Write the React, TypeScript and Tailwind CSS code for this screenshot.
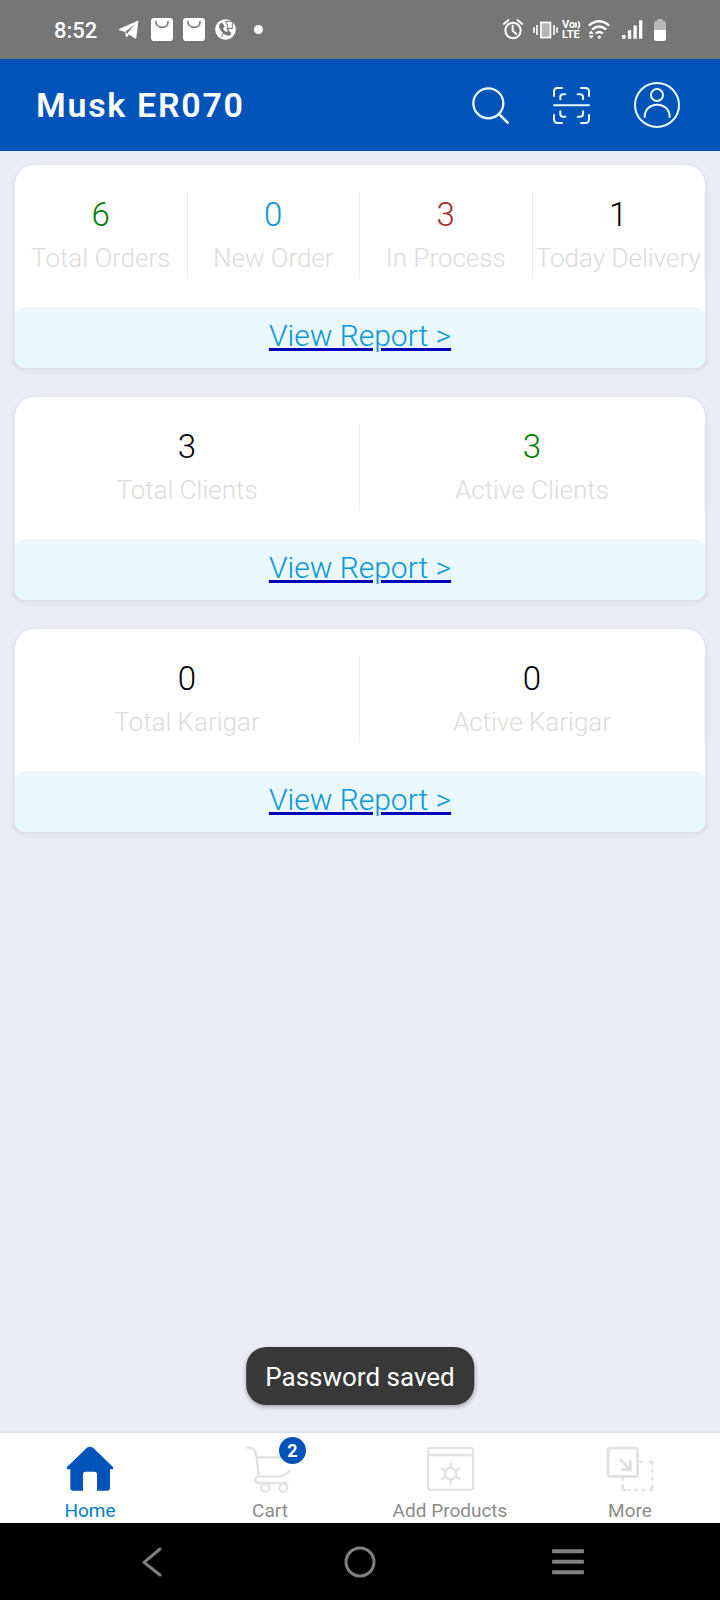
import React from "react";

type Stat = { value: number; label: string; color: string };

const cards: { id: string; stats: Stat[] }[] = [
  {
    id: "orders",
    stats: [
      { value: 6, label: "Total Orders", color: "text-[#008000]" },
      { value: 0, label: "New Order", color: "text-[#0496d8]" },
      { value: 3, label: "In Process", color: "text-[#a52a35]" },
      { value: 1, label: "Today Delivery", color: "text-black" },
    ],
  },
  {
    id: "clients",
    stats: [
      { value: 3, label: "Total Clients", color: "text-black" },
      { value: 3, label: "Active Clients", color: "text-[#008000]" },
    ],
  },
  {
    id: "karigar",
    stats: [
      { value: 0, label: "Total Karigar", color: "text-black" },
      { value: 0, label: "Active Karigar", color: "text-black" },
    ],
  },
];

function BagIcon() {
  return (
    <svg viewBox="0 0 66 69" className="h-[23px] w-[22px]" aria-hidden="true">
      <rect width="66" height="69" rx="10" fill="#fff" />
      <path d="M15 11c0 23 36 23 36 0" fill="none" stroke="#767676" strokeWidth="5" strokeLinecap="round" />
    </svg>
  );
}

function StatusBar() {
  return (
    <div className="flex h-[59px] items-center justify-between bg-[#767676] px-[54px] text-white">
      <div className="flex items-center">
        <span className="w-[65px] pt-[2px] text-[22px] font-medium leading-7">8:52</span>
        <svg viewBox="0 0 62 58" className="mr-3 h-[19px] w-5" aria-hidden="true">
          <path d="M60 1 2 27q-4 3 1 5l16 5 30-24-23 28 22 15q5 3 6-3Z" fill="#fff" />
          <path d="m19 37 3 17 9-9" fill="#fff" />
        </svg>
        <span className="flex items-center gap-[10px]">
          <BagIcon />
          <BagIcon />
          <svg viewBox="0 0 63 63" className="h-[21px] w-[21px]" aria-hidden="true">
            <circle cx="31.500" cy="31.500" r="31" fill="#fff" />
            <path d="M16 13c-6 5-4 16 3 24 8 10 20 17 27 11l3-6-9-8-6 5c-5-2-8-6-10-11l5-5-6-11Z" fill="#767676" />
            <path d="M31 7h21v22H37M37 15v18l9-8M20 54l5-12M31 7l5 10" fill="none" stroke="#767676" strokeWidth="3" />
          </svg>
        </span>
        <span className="ml-[18px] h-[9px] w-[9px] rounded-full bg-white" />
      </div>
      <div className="flex items-center">
        <svg viewBox="0 0 60 62" className="mr-[10px] h-[21px] w-5" fill="none" stroke="#fff" strokeWidth="6" aria-hidden="true">
          <circle cx="30" cy="34" r="23" />
          <path d="M29 20v15l10 9M3 14 16 3M57 14 44 3" strokeLinecap="round" />
        </svg>
        <svg viewBox="0 0 76 54" className="mr-1 h-[18px] w-[25px]" fill="none" stroke="#fff" strokeWidth="5" aria-hidden="true">
          <rect x="24" y="4" width="29" height="46" fill="#b5b5b5" />
          <path d="M3 19v16M12 12v30M64 12v30M73 19v16" />
        </svg>
        <span className="mr-[6px] flex w-5 flex-col text-[11px] font-bold leading-[10px]">
          <span className="flex items-center">
            Vo
            <svg viewBox="0 0 18 24" className="h-2 w-[6px]" fill="none" stroke="#fff" strokeWidth="5" aria-hidden="true">
              <path d="M1 5q6 7 0 14M9 1q9 11 0 22" />
            </svg>
          </span>
          <span>LTE</span>
        </span>
        <svg viewBox="0 0 66 58" className="mr-3 h-[19px] w-[22px]" fill="none" stroke="#fff" strokeWidth="7" aria-hidden="true">
          <path d="M2 17q31-26 62 0M12 29q21-18 43 0M23 41q11-9 22 0" />
          <circle cx="34" cy="52" r="5" fill="#fff" stroke="none" />
          <path d="m9 32 8 10H1ZM9 57l8-10H1Z" fill="#fff" stroke="none" />
        </svg>
        <svg viewBox="0 0 64 58" className="mr-[11px] h-[19px] w-[21px]" fill="#fff" aria-hidden="true">
          <path d="M0 46h11v11H0zM18 31h10v26H18zM35 17h10v40H35zM52 1h10v56H52z" />
        </svg>
        <svg viewBox="0 0 36 66" className="h-[22px] w-3" aria-hidden="true">
          <path d="M9 5q0-5 5-5h8q5 0 5 5 9 0 9 8v21H0V13q0-8 9-8Z" fill="#b8b8b8" />
          <path d="M0 33h36v25q0 8-8 8H8q-8 0-8-8Z" fill="#fff" />
        </svg>
      </div>
    </div>
  );
}

function Header() {
  return (
    <header className="flex h-[92px] items-center justify-between bg-[#0053b8] pl-9 pr-10 text-white">
      <h1 className="text-[34px] font-semibold leading-10 tracking-wider">Musk ER070</h1>
      <div className="flex items-center gap-11 text-[#eafcff]">
        <button type="button" aria-label="Search">
          <svg viewBox="0 0 111 111" className="h-[37px] w-[37px]" fill="none" stroke="currentColor" strokeWidth="7" strokeLinecap="round">
            <circle cx="49" cy="49" r="45" />
            <path d="m82 82 25 25" strokeWidth="8" />
          </svg>
        </button>
        <button type="button" aria-label="Scan code">
          <svg viewBox="0 0 111 111" className="h-[37px] w-[37px]" fill="none" stroke="currentColor" strokeWidth="6" strokeLinecap="round" strokeLinejoin="round">
            <path d="M3 27V14Q3 3 14 3h13M84 3h13q11 0 11 11v13M3 84v13q0 11 11 11h13M84 108h13q11 0 11-11V84M3 55h105" />
            <path d="M22 37v-7q0-8 8-8h7M74 22h7q9 0 9 8v7M22 73v8q0 8 8 8h7M74 89h7q9 0 9-8v-8" />
          </svg>
        </button>
        <button type="button" aria-label="Profile">
          <svg viewBox="0 0 138 138" className="h-[46px] w-[46px]" fill="none" stroke="currentColor" strokeWidth="6" strokeLinecap="round">
            <circle cx="69" cy="69" r="66" />
            <circle cx="69" cy="39" r="18" />
            <path d="M32 105c0-49 75-49 75 0" />
          </svg>
        </button>
      </div>
    </header>
  );
}

function StatCard({ id, stats }: { id: string; stats: Stat[] }) {
  return (
    <section className="rounded-t-[20px] rounded-b-[10px] bg-white shadow-[0_2px_6px_rgba(60,60,90,0.12)]">
      <dl className="flex pt-[27px] pb-7">
        {stats.map((s) => (
          <div
            key={s.label}
            className="flex flex-1 basis-0 flex-col-reverse items-center gap-[7px] border-r border-[#ededef] pt-[3px] pb-[5px] font-light last:border-[#f5f5f8]"
          >
            <dt className="whitespace-nowrap text-[26px] leading-8 text-[#dcdcdc]">{s.label}</dt>
            <dd className={`text-[33px] leading-10 ${s.color}`}>{s.value}</dd>
          </div>
        ))}
      </dl>
      <div className="flex justify-center rounded-[10px] bg-[#eaf7ff] pt-[11px] pb-[14px]">
        <a
          href={`#${id}`}
          className="text-[30px] font-light leading-9 text-[#0496d8] underline decoration-[#0000b4] decoration-[3px] underline-offset-2"
        >
          View Report &gt;
        </a>
      </div>
    </section>
  );
}

function HomeIcon() {
  return (
    <svg viewBox="0 0 144 144" className="h-12 w-12" fill="#0053b8" aria-hidden="true">
      <path d="M62 6q10-7 20 0l59 57q3 7-3 7h-6v56q0 8-8 8H93V85q0-8-8-8H59q-8 0-8 8v49H22q-9 0-9-8V70H6q-6 0-3-7Z" />
    </svg>
  );
}

function CartIcon() {
  return (
    <svg viewBox="0 0 144 144" className="h-12 w-12" fill="none" stroke="#e2e2e2" strokeWidth="7" strokeLinecap="round" aria-hidden="true">
      <path d="M5 5c18-2 24 9 27 29l6 57M32 34h76M38 91h62q16 0 29-15M38 91c-14 2-13 20 0 20h84" />
      <circle cx="58" cy="125" r="12" />
      <circle cx="112" cy="125" r="12" />
    </svg>
  );
}

function ProductIcon() {
  return (
    <svg viewBox="0 0 144 144" className="h-12 w-12" fill="none" stroke="#e2e2e2" strokeWidth="6" strokeLinecap="round" aria-hidden="true">
      <rect x="6" y="6" width="135" height="125" rx="7" />
      <path d="M7 27h133" strokeWidth="7" />
      <circle cx="74" cy="83" r="17" strokeWidth="7" />
      <path d="M74 65V53M74 101v12M58 74l-10-6M90 74l10-6M58 92l-10 6M90 92l10 6" strokeWidth="7" />
    </svg>
  );
}

function MoreIcon() {
  return (
    <svg viewBox="0 0 144 144" className="h-12 w-12" fill="none" stroke="#e0e0e0" strokeWidth="8" aria-hidden="true">
      <rect x="6" y="6" width="89" height="86" rx="8" />
      <path d="m42 40 29 29M45 71h28V42" />
      <path d="M100 48h9M129 48h10v9M139 70v10M139 93v10M139 117v15h-9M117 132h-9M95 132h-9M73 132h-9M50 95v9M50 115v17h10" strokeWidth="7" />
    </svg>
  );
}

const tabs = [
  { label: "Home", Icon: HomeIcon, active: true, badge: 0 },
  { label: "Cart", Icon: CartIcon, active: false, badge: 2 },
  { label: "Add Products", Icon: ProductIcon, active: false, badge: 0 },
  { label: "More", Icon: MoreIcon, active: false, badge: 0 },
];

function TabBar() {
  return (
    <nav className="grid grid-cols-4 bg-white shadow-[0_-1px_3px_rgba(0,0,0,0.1)]" aria-label="Main">
      {tabs.map(({ label, Icon, active, badge }) => (
        <a
          key={label}
          href="#"
          className={`flex flex-col items-center gap-[5px] pt-[13px] ${active ? "text-[#0080cc]" : "text-[#8c8c8c]"}`}
        >
          <span className="relative">
            <Icon />
            {badge > 0 && (
              <span className="absolute -top-[9px] left-[33px] flex h-[27px] w-[27px] items-center justify-center rounded-full bg-[#0053b8] text-lg font-bold leading-none text-white">
                {badge}
              </span>
            )}
          </span>
          <span className="whitespace-nowrap text-[19px] leading-6">{label}</span>
        </a>
      ))}
    </nav>
  );
}

function SystemNav() {
  return (
    <div className="grid h-[77px] grid-cols-3 items-center justify-items-center bg-black px-12 text-[#808080]">
      <button type="button" aria-label="Back">
        <svg viewBox="0 0 60 90" className="h-[30px] w-5" fill="none" stroke="currentColor" strokeWidth="9" strokeLinecap="round" strokeLinejoin="round">
          <path d="M54 6 6 46l48 38" />
        </svg>
      </button>
      <button type="button" aria-label="Home screen">
        <svg viewBox="0 0 96 96" className="h-8 w-8" fill="none" stroke="currentColor" strokeWidth="9">
          <circle cx="48" cy="48" r="42" />
        </svg>
      </button>
      <button type="button" aria-label="Recent apps">
        <svg viewBox="0 0 96 78" className="h-[26px] w-8" fill="currentColor">
          <rect y="1" width="96" height="12" rx="3" />
          <rect y="32" width="96" height="12" rx="3" />
          <rect y="64" width="96" height="12" rx="3" />
        </svg>
      </button>
    </div>
  );
}

export default function App() {
  return (
    <div className="flex min-h-screen flex-col bg-[#ebecf6] font-[Roboto,sans-serif]">
      <StatusBar />
      <Header />
      <main className="relative flex flex-1 flex-col gap-[29px] px-[15px] pt-[14px]">
        {cards.map((c) => (
          <StatCard key={c.id} id={c.id} stats={c.stats} />
        ))}
        <div
          role="status"
          className="absolute bottom-7 left-1/2 -translate-x-1/2 whitespace-nowrap rounded-[20px] bg-[#383838] px-[19px] pt-[14px] pb-3 text-[26px] leading-8 text-white shadow-[0_2px_4px_rgba(0,0,0,0.3)]"
        >
          Password saved
        </div>
      </main>
      <TabBar />
      <SystemNav />
    </div>
  );
}
